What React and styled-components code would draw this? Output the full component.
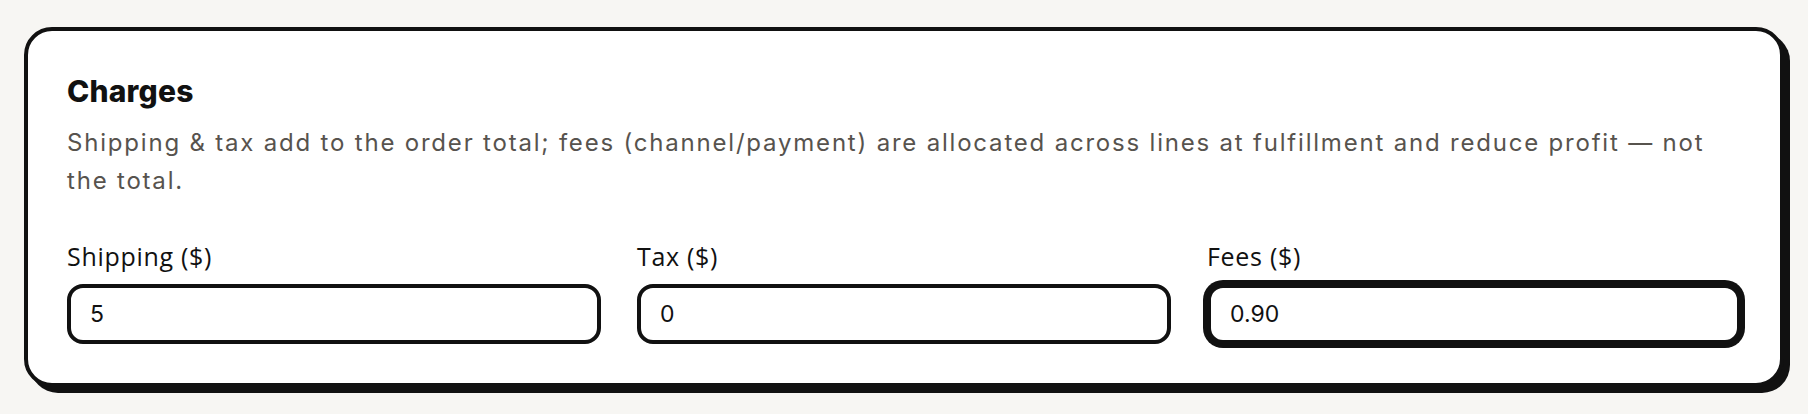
import React from 'react';
import styled, { createGlobalStyle } from 'styled-components';

const GlobalStyle = createGlobalStyle`
  * { box-sizing: border-box; }
  body {
    margin: 0;
    background: #f7f6f3;
    font-family: 'Inter', 'Noto Sans', sans-serif;
  }
`;

const Page = styled.div`
  padding: 27px 24px;
`;

const Card = styled.section`
  background: #fff;
  border: 4px solid #111;
  border-radius: 28px;
  box-shadow: 6px 6px 0 #111;
  padding: 42px 39px 39px;
`;

const Title = styled.h2`
  margin: 0;
  font-size: 30px;
  line-height: 36px;
  font-weight: 800;
  letter-spacing: 0.2px;
  color: #111;
`;

const Description = styled.p`
  margin: 15px 0 0;
  font-size: 24px;
  line-height: 38px;
  letter-spacing: 1.8px;
  color: #57534e;
`;

const Fields = styled.div`
  display: grid;
  grid-template-columns: repeat(3, 1fr);
  gap: 36px;
  margin-top: 42px;
`;

const Field = styled.label`
  display: flex;
  flex-direction: column;
  gap: 13px;
`;

const LabelText = styled.span`
  font-family: 'Open Sans', sans-serif;
  font-size: 25px;
  line-height: 29px;
  font-weight: 500;
  letter-spacing: 0.7px;
  color: #111;
`;

const Input = styled.input`
  height: 60px;
  width: 100%;
  border: 4px solid #111;
  border-radius: 16px;
  padding: 0 19px;
  font-family: 'Inter', sans-serif;
  font-size: 23px;
  color: #111;
  background: #fff;
  outline: none;
  box-shadow: ${p => (p.$focused ? '0 0 0 4px #111' : 'none')};
`;

const fields = [
  { label: 'Shipping ($)', value: '5' },
  { label: 'Tax ($)', value: '0' },
  { label: 'Fees ($)', value: '0.90', focused: true },
];

export default function App() {
  return (
    <>
      <GlobalStyle />
      <Page>
        <Card>
          <Title>Charges</Title>
          <Description>
            Shipping &amp; tax add to the order total; fees (channel/payment) are allocated across lines at
            fulfillment and reduce profit — not the total.
          </Description>
          <Fields>
            {fields.map(f => (
              <Field key={f.label}>
                <LabelText>{f.label}</LabelText>
                <Input defaultValue={f.value} $focused={f.focused} />
              </Field>
            ))}
          </Fields>
        </Card>
      </Page>
    </>
  );
}
